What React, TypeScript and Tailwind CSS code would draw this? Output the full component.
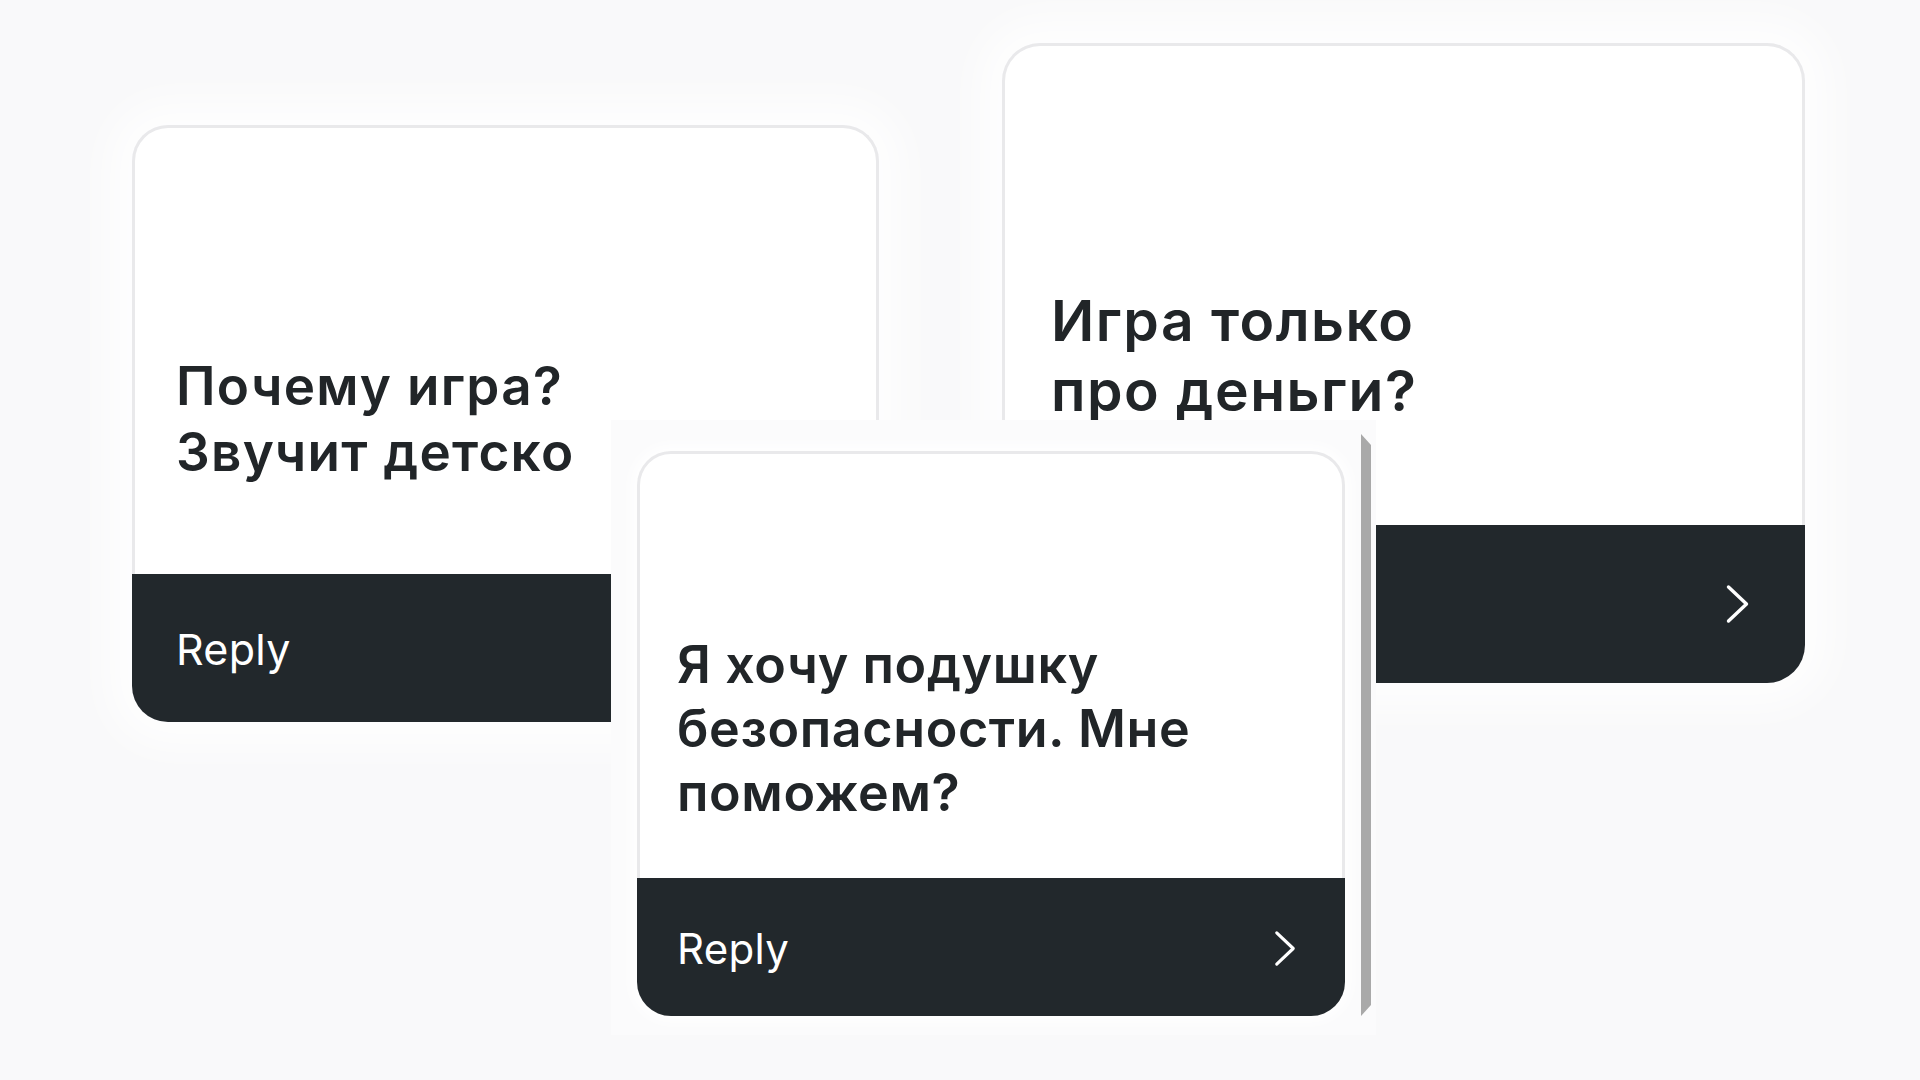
import { ReactNode } from "react";

/* --------- small pieces --------- */

function Chevron({ className }: { className: string }) {
  return (
    <svg viewBox="0 0 24 40" className={className} fill="none">
      <polyline
        points="3,3 21,20 3,37"
        stroke="#ffffff"
        strokeWidth="3.4"
        strokeLinecap="round"
        strokeLinejoin="round"
      />
    </svg>
  );
}

function Title({ children, className }: { children: ReactNode; className: string }) {
  return <p className={`font-semibold text-[#212528] ${className}`}>{children}</p>;
}

/* --------- page --------- */

export default function App() {
  return (
    <div
      className="relative w-[1920px] h-[1080px] overflow-hidden bg-[#f9f9fa]"
      style={{ fontFamily: "Inter, 'Noto Sans', sans-serif" }}
    >
      {/* left card: Почему игра? */}
      <div className="absolute left-[132px] top-[125px] w-[747px] h-[597px] flex flex-col rounded-[36px] shadow-[0_0_40px_24px_rgba(255,255,255,0.8)]">
        <div className="flex-1 bg-white border-[3px] border-b-0 border-[#e9e9eb] rounded-t-[36px] pl-[41px] pt-[225px]">
          <Title className="text-[53px] leading-[66px] tracking-[1.3px]">
            Почему игра?
            <br />
            Звучит детско
          </Title>
        </div>
        <div className="h-[148px] bg-[#22282c] rounded-b-[36px] flex items-center pl-[44px] pt-[3px]">
          <span className="text-white text-[43px] leading-none tracking-[0.3px]">Reply</span>
        </div>
      </div>

      {/* right card: Игра только про деньги? */}
      <div className="absolute left-[1002px] top-[43px] w-[803px] h-[640px] flex flex-col rounded-[38px] shadow-[0_0_40px_24px_rgba(255,255,255,0.8)]">
        <div className="flex-1 bg-white border-[3px] border-b-0 border-[#e9e9eb] rounded-t-[38px] pl-[46px] pt-[240px]">
          <Title className="text-[57px] leading-[70px] tracking-[1.5px]">
            Игра только
            <br />
            про деньги?
          </Title>
        </div>
        <div className="h-[158px] bg-[#22282c] rounded-b-[38px] flex items-center justify-between pl-[49px] pr-[55px]">
          <span className="text-white text-[46px] leading-none">Reply</span>
          <Chevron className="w-[25px] h-[40px]" />
        </div>
      </div>

      {/* pasted screenshot on top */}
      <div className="absolute left-[611px] top-[420px] w-[765px] h-[615px] bg-[#fbfbfc]" />

      <div className="absolute left-[637px] top-[451px] w-[708px] h-[565px] flex flex-col rounded-[34px] shadow-[0_0_14px_6px_rgba(255,255,255,0.9)]">
        <div className="flex-1 bg-white border-[3px] border-b-0 border-[#e9e9eb] rounded-t-[34px] pl-[37px] pt-[179px]">
          <Title className="text-[52px] leading-[64px] tracking-[0.6px]">
            Я хочу подушку
            <br />
            безопасности. Мне
            <br />
            поможем?
          </Title>
        </div>
        <div className="h-[138px] bg-[#22282c] rounded-b-[34px] flex items-center justify-between pl-[40px] pr-[49px] pt-[3px]">
          <span className="text-white text-[42px] leading-none tracking-[0.3px]">Reply</span>
          <Chevron className="w-[22px] h-[37px]" />
        </div>
      </div>

      {/* grey edge of the phone frame */}
      <div className="absolute left-[1361px] top-[434px] w-[10px] h-[582px] bg-[#a9a9a9] [clip-path:polygon(0_0,100%_11px,100%_calc(100%-11px),0_100%)]" />
    </div>
  );
}
